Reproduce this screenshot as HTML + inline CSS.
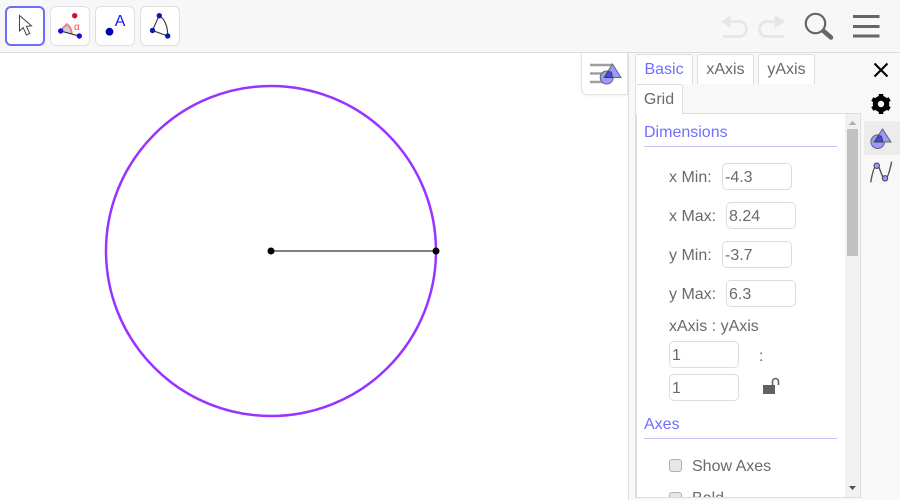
<!DOCTYPE html>
<html><head><meta charset="utf-8">
<style>
html,body{margin:0;padding:0;width:900px;height:500px;overflow:hidden;background:#fff;font-family:"Liberation Sans",sans-serif;color:#6a6a6a;font-size:16px}
div,span{position:absolute;box-sizing:border-box;white-space:nowrap}
.btn{top:6px;width:40px;height:40px;border:1px solid #e0e0e0;border-radius:6px;background:#fff}
.tab{height:30px;border:1px solid #ddd;border-bottom:none;border-radius:3px 3px 0 0;background:#fff;line-height:29px;text-align:center;font-size:16px}
.inp{width:70px;height:27px;border:1px solid #dcdcdc;border-radius:5px;background:#fff;padding-left:2px;line-height:28px;font-size:16px}
.lbl{line-height:20px;font-size:16px}
.h{color:#6f6fff;font-size:16px;line-height:20px}
.rule{height:1px;background:#c4c4fb;left:644px;width:193px}
.cb{width:13px;height:13px;background:#e6e6e6;border:1px solid #b0b0b0;border-radius:3px}
</style></head><body>
<div style="left:0;top:0;width:900px;height:52px;background:#f7f7f7"></div>
<div style="left:0;top:52px;width:900px;height:1px;background:#dcdcdc"></div>

<div class="btn" style="left:5px;border:2.500px solid #6c6cff"></div>
<div class="btn" style="left:50px"></div>
<div class="btn" style="left:95px"></div>
<div class="btn" style="left:140px"></div>

<svg style="position:absolute;left:0;top:0" width="200" height="52">
<path d="M19.500 15.500V31l3.600-3.400L26.500 35l3.200-1.500-3.300-7.200 5.100-.4z" fill="#fff" stroke="#444" stroke-width="1"/>
<path d="M60.700 31 L66.800 24.200 A12 12 0 0 1 71.700 33.500Z" fill="#d2d2d2"/>
<path d="M62 29 L66.800 24.200 A12 12 0 0 1 71.700 33.500" fill="none" stroke="#f07f8c" stroke-width="2"/>
<path d="M60.700 31 L79 36" stroke="#222" stroke-width="1.100" fill="none"/>
<circle cx="60.700" cy="31" r="2.700" fill="#1212d8"/><circle cx="79.300" cy="36" r="2.700" fill="#1212d8"/><circle cx="74.700" cy="15.700" r="2.700" fill="#d01428"/>
<text x="74" y="30" font-size="10" fill="#e8505c" font-family="Liberation Sans">α</text>
<circle cx="109.500" cy="31.700" r="3.900" fill="#0000a8"/>
<text x="114.800" y="26" font-size="16" fill="#1414ff" font-family="Liberation Sans">A</text>
<path d="M159 15.700 C164 18 168 26 167.700 36L152.500 30.500Z" fill="none" stroke="#333" stroke-width="1.100"/>
<circle cx="159.300" cy="15.700" r="2.700" fill="#0f1aa8"/><circle cx="152.500" cy="30.500" r="2.700" fill="#0f1aa8"/><circle cx="167.700" cy="36" r="2.700" fill="#0f1aa8"/>
</svg>

<svg style="position:absolute;left:700px;top:0" width="200" height="52">
<path d="M28 21.500H39a7.500 7.500 0 0 1 7.500 7.500 7.500 7.500 0 0 1-7.500 7.500H23" fill="none" stroke="#e6e6e6" stroke-width="2.800"/>
<path d="M21.500 21.500 30.500 15V28Z" fill="#e6e6e6"/>
<path d="M79 21.500H67a7.500 7.500 0 0 0-7.500 7.500 7.500 7.500 0 0 0 7.500 7.500H84" fill="none" stroke="#e6e6e6" stroke-width="2.800"/>
<path d="M85.500 21.500 74.500 15V28Z" fill="#e6e6e6"/>
<circle cx="115.500" cy="23.500" r="9.700" fill="none" stroke="#666" stroke-width="2.200"/>
<path d="M123.500 31 131 37.500" stroke="#666" stroke-width="4.500" stroke-linecap="round"/>
<path d="M153 16.500H179.500M153 26.500H179.500M153 36H179.500" stroke="#666" stroke-width="3"/>
</svg>

<svg style="position:absolute;left:0;top:53px" width="628" height="447">
<circle cx="271" cy="198" r="165" fill="none" stroke="#9933ff" stroke-width="2.500"/>
<path d="M271 198H436" stroke="#555" stroke-width="1.400"/>
<circle cx="271" cy="198" r="3.500" fill="#000"/><circle cx="436" cy="198" r="3.500" fill="#000"/>
</svg>

<div style="left:581px;top:53px;width:47px;height:42px;background:#fff;border:1px solid #e4e4e4;border-top:none;border-radius:0 0 0 6px;box-shadow:0 1px 2px rgba(0,0,0,.06)"></div>
<svg style="position:absolute;left:581px;top:53px" width="47" height="42">
<path d="M9 12H31M9 20.500H22M9 29H22" stroke="#a0a0a0" stroke-width="2.400"/>
<circle cx="25.700" cy="24.500" r="6.500" fill="#9999ff" stroke="#666" stroke-width="1"/>
<path d="M31.500 11 40 24.500H23Z" fill="#9999ff" stroke="#666" stroke-width="1"/>
<path d="M27 18.500 24 24.500H31.500L30.500 19Z" fill="#4a4ad8" stroke="#333" stroke-width=".7"/>
</svg>

<div style="left:628px;top:53px;width:272px;height:447px;background:#f8f8f8;border-left:1px solid #dedede"></div>

<div class="tab" style="left:635px;top:54px;width:58px;height:30px;color:#6f6fff">Basic</div>
<div class="tab" style="left:697px;top:54px;width:57px;height:30px">xAxis</div>
<div class="tab" style="left:758px;top:54px;width:57px;height:30px">yAxis</div>
<div class="tab" style="left:635px;top:84px;width:48px;height:30px">Grid</div>

<div style="left:635px;top:113px;width:226px;height:385px;border:1px solid #ddd;border-left-width:2px;background:#fff;overflow:hidden"></div>
<div style="left:635px;top:113px;width:48px;height:2px;background:#fff;border-left:1px solid #ddd;border-right:1px solid #ddd"></div>

<div style="left:845px;top:114px;width:15px;height:383px;background:#f1f1f1"></div>
<div style="left:847px;top:129px;width:11px;height:127px;background:#c1c1c1"></div>
<svg style="position:absolute;left:845px;top:114px" width="15" height="383">
<path d="M3.500 11 7.500 7 11.500 11Z" fill="#b0b0b0"/><path d="M4 372H11L7.500 376Z" fill="#505050"/>
</svg>

<div class="h" style="left:644px;top:123px">Dimensions</div>
<div class="rule" style="top:146px"></div>

<div class="lbl" style="left:669px;top:168px">x Min:</div>
<div class="inp" style="left:722px;top:163px">-4.3</div>
<div class="lbl" style="left:669px;top:207px">x Max:</div>
<div class="inp" style="left:726px;top:202px">8.24</div>
<div class="lbl" style="left:669px;top:246px">y Min:</div>
<div class="lbl" style="left:669px;top:285px">y Max:</div>
<div class="inp" style="left:722px;top:241px">-3.7</div>
<div class="inp" style="left:726px;top:280px">6.3</div>
<div class="lbl" style="left:669px;top:317px">xAxis : yAxis</div>
<div class="inp" style="left:669px;top:341px">1</div>
<div class="lbl" style="left:759px;top:347px">:</div>
<div class="inp" style="left:669px;top:374px">1</div>
<svg style="position:absolute;left:760px;top:376px" width="22" height="20">
<rect x="3" y="9" width="12" height="9" fill="#616161"/>
<path d="M12.500 9V5.500a3 3 0 0 1 6 0V9" fill="none" stroke="#616161" stroke-width="1.600"/>
</svg>

<div class="h" style="left:644px;top:415px">Axes</div>
<div class="rule" style="top:438px"></div>
<div class="cb" style="left:669px;top:459px"></div>
<div class="lbl" style="left:692px;top:457px">Show Axes</div>
<div style="left:636px;top:488px;width:209px;height:9px;overflow:hidden">
<div class="cb" style="left:33px;top:4px"></div>
<div class="lbl" style="left:56px;top:1px">Bold</div>
</div>

<div style="left:864px;top:121px;width:36px;height:34px;background:#ececec"></div>
<svg style="position:absolute;left:861px;top:53px" width="39" height="140">
<path d="M13.500 10.500 26.500 23.500M26.500 10.500 13.500 23.500" stroke="#000" stroke-width="2"/>
<g transform="translate(20 51)">
<circle r="5.700" fill="none" stroke="#000" stroke-width="5"/>
<path d="M-2.200-10H2.200V-6H-2.200ZM-2.200 6H2.200V10H-2.200Z" fill="#000"/>
<path d="M-2.200-10H2.200V-6H-2.200ZM-2.200 6H2.200V10H-2.200Z" fill="#000" transform="rotate(60)"/>
<path d="M-2.200-10H2.200V-6H-2.200ZM-2.200 6H2.200V10H-2.200Z" fill="#000" transform="rotate(120)"/>
</g>
<circle cx="16.700" cy="88.700" r="6.800" fill="#9999ff" stroke="#666" stroke-width="1"/>
<path d="M21.500 76 30 89H13Z" fill="#9999ff" stroke="#666" stroke-width="1"/>
<path d="M17.500 82.500 14 89H22L20.500 83Z" fill="#4a4ad8" stroke="#333" stroke-width=".7"/>
<path d="M9.700 129.300C11.500 119 13.500 112.700 15.700 112.700C19.500 112.700 20 125.300 24 125.300C27 125.300 28.500 118 30.700 108.700" fill="none" stroke="#555" stroke-width="1.400"/>
<circle cx="15.700" cy="112.700" r="2.700" fill="#9999ff" stroke="#444" stroke-width="1"/>
<circle cx="24" cy="125.300" r="2.700" fill="#9999ff" stroke="#444" stroke-width="1"/>
</svg>
</body></html>
